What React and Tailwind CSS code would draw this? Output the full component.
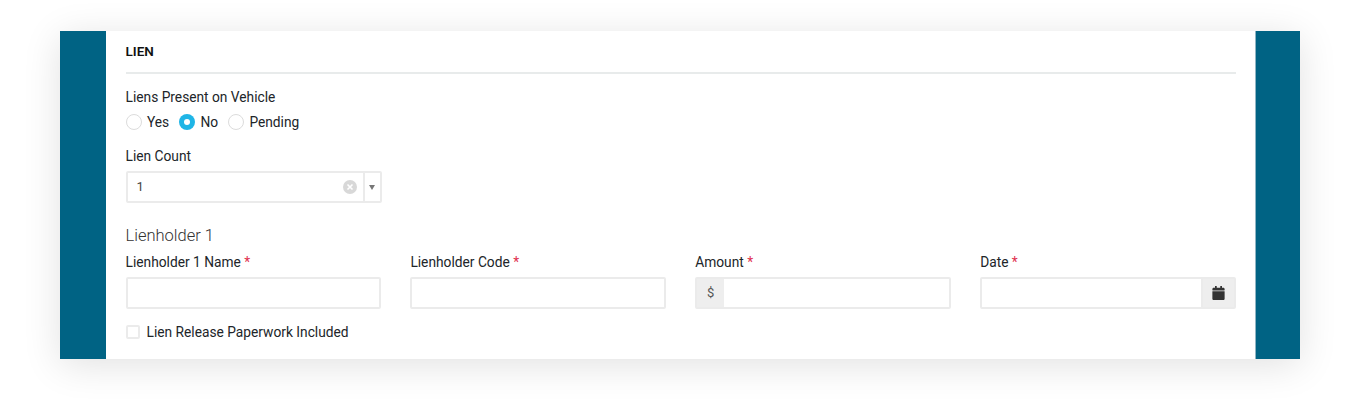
import { FaCalendar } from 'react-icons/fa';

const Radio = ({ label, checked }) => (
  <label className="flex items-center gap-[5.5px]">
    {checked ? (
      <span className="flex h-4 w-4 items-center justify-center rounded-full bg-[#1fb5e6]">
        <span className="h-[6px] w-[6px] rounded-full bg-white" />
      </span>
    ) : (
      <span className="h-4 w-4 rounded-full border border-[#dcdcdc] bg-white" />
    )}
    <span>{label}</span>
  </label>
);

const Label = ({ children, required }) => (
  <div className="h-[20px] leading-[20px] text-[#212529]">
    {children}
    {required && <span className="text-[#e0304e]"> *</span>}
  </div>
);

const boxClass = 'flex h-[32px] rounded-[2px] border-2 border-[#ebebeb] bg-white';

const App = () => {
  return (
    <div className="h-[402px] overflow-hidden bg-white px-[60px] pt-[31px] font-['Roboto',sans-serif] text-[13.75px] text-[#212529]">
      <div className="flex h-[328px] bg-[#006384] shadow-[0_6px_36px_rgba(0,0,0,0.12)]">
        <div className="w-[46px] shrink-0" />
        <div className="flex-1 border-r border-[#8fb5c4] bg-white pr-[19px] pl-[19.5px]">
          <div className="h-[43px] border-b-2 border-[#e8ebeb] pt-[11px] text-[13.5px] leading-[18px] font-semibold text-[#111]">
            LIEN
          </div>

          <div className="mt-[13px]">
            <Label>Liens Present on Vehicle</Label>
            <div className="mt-[5px] flex h-[20px] items-center gap-[9.75px] leading-[20px]">
              <Radio label="Yes" />
              <Radio label="No" checked />
              <Radio label="Pending" />
            </div>
          </div>

          <div className="mt-[14px]">
            <Label>Lien Count</Label>
            <div className={`${boxClass} mt-[5px] w-[256px] items-center`}>
              <span className="flex-1 pl-[9px] text-[13px] text-[#444]">1</span>
              <svg viewBox="0 0 14 14" className="mr-[6px] h-[14px] w-[14px]">
                <circle cx="7" cy="7" r="7" fill="#d8d8d8" />
                <path d="M4.5 4.5l5 5M9.5 4.5l-5 5" stroke="#fff" strokeWidth="1.6" />
              </svg>
              <span className="flex h-full w-[17px] items-center justify-center border-l-2 border-[#ebebeb]">
                <svg viewBox="0 0 6 5" className="h-[5px] w-[6px]">
                  <path d="M0 0h6L3 5z" fill="#777" />
                </svg>
              </span>
            </div>
          </div>

          <div className="mt-[22px] text-[16.5px] leading-[22px] font-light text-[#333]">Lienholder 1</div>

          <div className="mt-[5px] grid grid-cols-4 gap-[29px]">
            <div>
              <Label required>Lienholder 1 Name</Label>
              <div className={`${boxClass} mt-[5px]`} />
            </div>
            <div>
              <Label required>Lienholder Code</Label>
              <div className={`${boxClass} mt-[5px]`} />
            </div>
            <div>
              <Label required>Amount</Label>
              <div className={`${boxClass} mt-[5px]`}>
                <span className="flex w-[27px] items-center justify-center bg-[#eeeeee] text-[13px] text-[#555]">$</span>
              </div>
            </div>
            <div>
              <Label required>Date</Label>
              <div className={`${boxClass} mt-[5px] justify-end`}>
                <span className="flex w-[33px] items-center justify-center border-l-2 border-[#ebebeb] bg-[#eeeeee]">
                  <FaCalendar className="h-[14px] w-[13px] text-[#333]" />
                </span>
              </div>
            </div>
          </div>

          <label className="mt-[13px] flex h-[20px] items-center gap-[7px]">
            <span className="h-[14px] w-[14px] rounded-[2px] border-2 border-[#ebebeb] bg-white" />
            <span>Lien Release Paperwork Included</span>
          </label>
        </div>
        <div className="w-[44px] shrink-0" />
      </div>
    </div>
  );
};

export default App;
